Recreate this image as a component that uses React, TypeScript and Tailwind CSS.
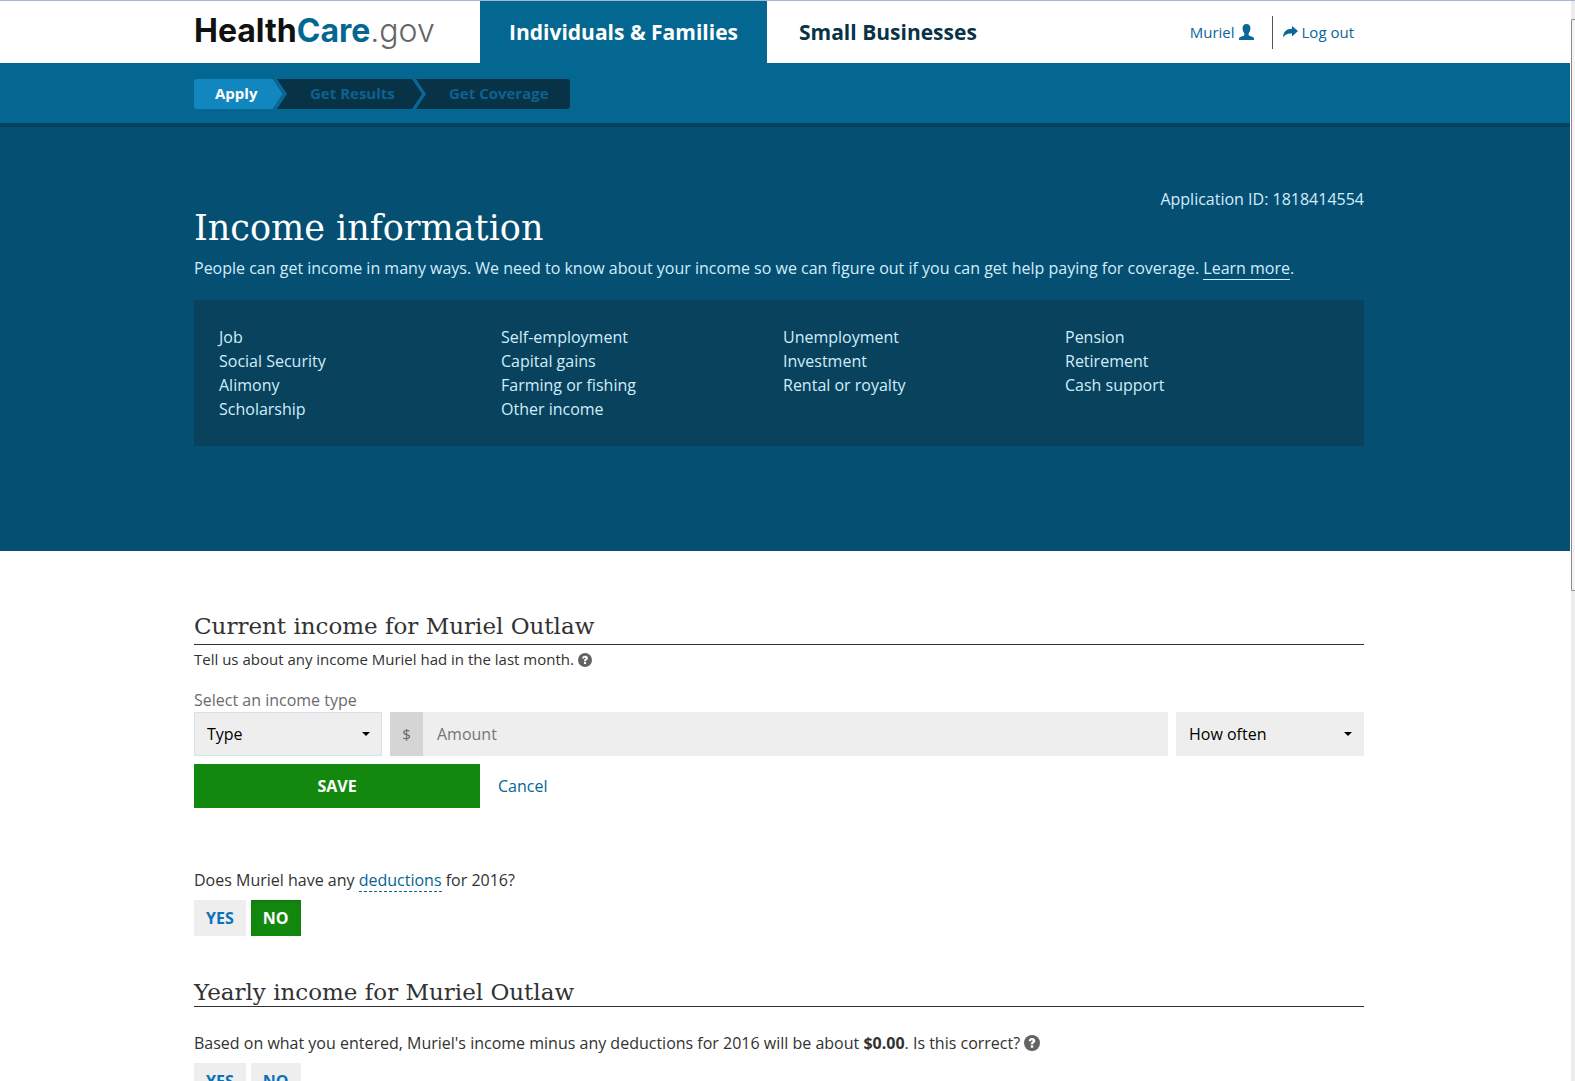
import { useState } from "react";

const incomeTypes = [
  ["Job", "Social Security", "Alimony", "Scholarship"],
  ["Self-employment", "Capital gains", "Farming or fishing", "Other income"],
  ["Unemployment", "Investment", "Rental or royalty"],
  ["Pension", "Retirement", "Cash support"],
];

function UserIcon() {
  return (
    <svg width="15" height="16" viewBox="0 0 16 16" preserveAspectRatio="none" fill="currentColor" aria-hidden="true">
      <path d="M8 0C5.200 0 3.800 1.700 3.800 4.200c0 1.900.7 3.900 1.900 5v1.500c0 .5-.3.900-.8 1.100L1.300 13.100C.5 13.400 0 14.100 0 15v1h16v-1c0-.9-.5-1.600-1.300-1.900l-3.600-1.300c-.5-.2-.8-.6-.8-1.100V9.200c1.200-1.100 1.900-3.100 1.900-5C12.200 1.700 10.800 0 8 0z" />
    </svg>
  );
}

function ShareIcon() {
  return (
    <svg width="15" height="12" viewBox="0 0 15 12" fill="currentColor" aria-hidden="true">
      <path d="M9 0l6 5-6 5.500V7.500C5 7.200 2.200 8 0 11.500.3 6 3.500 2.700 9 2.700z" />
    </svg>
  );
}

function HelpButton({ label, large = false }: { label: string; large?: boolean }) {
  return (
    <button type="button" aria-label={label} className="ml-1 inline-block align-[-2px] text-[#636363]">
      <svg className={large ? "size-4" : "size-3.5"} viewBox="0 0 16 16" aria-hidden="true">
        <circle cx="8" cy="8" r="8" fill="currentColor" />
        <path
          d="M4.700 6.300C4.800 4.200 6 3 8.100 3c1.900 0 3.200 1 3.200 2.700 0 1.300-.7 1.900-1.400 2.400-.5.400-.7.600-.7 1.200H6.800c0-1.300.4-1.800 1.100-2.300.6-.4.800-.7.800-1.100 0-.4-.3-.7-.8-.7-.6 0-.9.400-.9 1.100zM6.800 10.300h2.400v2.400H6.800z"
          fill="#fff"
        />
      </svg>
    </button>
  );
}

function StepArrow({ from }: { from: string }) {
  return (
    <svg width="14" height="30" viewBox="0 0 14 30" className="shrink-0" aria-hidden="true">
      <path d="M0 0h14v30H0z" fill="#083346" />
      <path d="M0 0l10 15L0 30z" fill={from} />
      <path d="M0 0h4l10 15L4 30H0l10-15z" fill="#0a6797" />
    </svg>
  );
}

function SelectBox({ label, outlined = false }: { label: string; outlined?: boolean }) {
  return (
    <div className="relative w-47 shrink-0">
      <select
        aria-label={label}
        id={outlined ? "income-type" : "how-often"}
        className={
          outlined
            ? "h-11 w-full appearance-none border border-[#d3e1ec] bg-[#eee] px-3 text-base text-black"
            : "h-11 w-full appearance-none border border-[#eee] bg-[#eee] px-3 text-base text-black"
        }
      >
        <option>{label}</option>
      </select>
      <svg className="pointer-events-none absolute top-5 right-3" width="8" height="4" viewBox="0 0 8 4" aria-hidden="true">
        <path d="M0 0h8L4 4z" fill="#000" />
      </svg>
    </div>
  );
}

function YesNo({ name, initial }: { name: string; initial: string | null }) {
  const [value, setValue] = useState(initial);
  return (
    <div role="group" aria-label={name} className="flex gap-[5px]">
      {["YES", "NO"].map((option) => (
        <button
          key={option}
          type="button"
          aria-pressed={value === option}
          onClick={() => setValue(option)}
          className={
            value === option
              ? "h-9 bg-[#12890e] px-3 text-base font-bold text-white inset-shadow-[0_2px_4px_rgba(0,0,0,0.12)]"
              : "h-9 bg-[#eee] px-3 text-base font-bold text-[#0b71bb]"
          }
        >
          {option}
        </button>
      ))}
    </div>
  );
}

export default function App() {
  return (
    <div className="flex h-screen overflow-hidden border-t border-[#a5b8d0] bg-white font-['Open_Sans',sans-serif] text-base text-[#323232]">
      <div className="min-w-0 flex-1">
        <header className="pr-3">
          <div className="mx-auto flex h-[62px] max-w-[1170px]">
            <a href="#home" className="w-[286px] pt-2 font-[Inter,sans-serif] text-[32px] leading-11 whitespace-nowrap">
              <span className="font-bold text-[#111]">Health</span>
              <span className="font-bold text-[#046791]">Care</span>
              <span className="font-light text-[#666]">.gov</span>
            </a>
            <nav className="flex text-[21px] leading-[62px] font-bold whitespace-nowrap">
              <a href="#individuals" className="bg-[#046791] px-[29px] text-white">Individuals &amp; Families</a>
              <a href="#small-businesses" className="px-8 text-[#083346]">Small Businesses</a>
            </nav>
            <div className="mr-2.5 ml-auto flex items-center text-[15px] text-[#0a6797]">
              <a href="#account" className="flex items-center gap-1 pr-[18px]">
                Muriel <UserIcon />
              </a>
              <a href="#logout" className="flex h-[33px] items-center gap-1 border-l border-[#555] pl-2.5">
                <ShareIcon /> Log out
              </a>
            </div>
          </div>
        </header>

        <div className="border-b-4 border-[#05425d] bg-[#046791] pt-4 pr-3 pb-3.5">
          <div className="mx-auto max-w-[1170px]">
            <ol className="flex h-[30px] w-fit overflow-hidden rounded-[3px] text-[15px] leading-7 font-bold text-[#0d6290]">
              <li className="flex">
                <span className="w-[79px] bg-[#1287bf] pl-[21px] text-white">Apply</span>
                <StepArrow from="#1287bf" />
              </li>
              <li className="flex">
                <span className="w-[125px] bg-[#083346] pl-[23px]">Get Results</span>
                <StepArrow from="#083346" />
              </li>
              <li className="w-36 bg-[#083346] pl-[23px]">Get Coverage</li>
            </ol>
          </div>
        </div>

        <section className="bg-[#054f72] pt-[60px] pr-3 pb-[105px] text-[#d0edfb]">
          <div className="mx-auto max-w-[1170px]">
            <p className="text-right leading-6">Application ID: 1818414554</p>
            <h1 className="-mt-[3px] font-['DejaVu_Serif',serif] text-[35px] leading-10 text-white">Income information</h1>
            <p className="mt-2 leading-6">
              People can get income in many ways. We need to know about your income so we can figure out if you can get help paying for coverage.{" "}
              <a href="#learn-more" className="border-b border-[#d0edfb]">Learn more</a>.
            </p>
            <div className="mt-5 grid grid-cols-4 bg-[#09425c] py-[25px] pr-[17px] pl-[25px] leading-6">
              {incomeTypes.map((column) => (
                <ul key={column[0]}>
                  {column.map((item) => (
                    <li key={item}>{item}</li>
                  ))}
                </ul>
              ))}
            </div>
          </div>
        </section>

        <main className="pt-[57px] pr-3">
          <div className="mx-auto max-w-[1170px]">
            <section>
              <h2 className="border-b border-[#323232] font-['DejaVu_Serif',serif] text-[23px] leading-9">
                Current income for Muriel Outlaw
              </h2>
              <p className="mt-0.5 text-[15px] leading-6">
                Tell us about any income Muriel had in the last month.
                <HelpButton label="Help with current income" />
              </p>
              <form className="mt-[17px]" onSubmit={(e) => e.preventDefault()}>
                <label htmlFor="income-type" className="block leading-6 text-[#6b6b6b]">Select an income type</label>
                <div className="flex gap-2">
                  <SelectBox label="Type" outlined />
                  <div className="flex h-11 min-w-0 flex-1">
                    <span className="w-[33px] bg-[#d5d5d5] text-center text-[15px] leading-11 text-[#666]">$</span>
                    <input
                      type="text"
                      aria-label="Amount"
                      placeholder="Amount"
                      className="min-w-0 flex-1 bg-[#eee] px-3.5 text-base placeholder:text-[#757575]"
                    />
                  </div>
                  <SelectBox label="How often" />
                </div>
                <div className="mt-2 flex items-center gap-[18px]">
                  <button type="submit" className="h-11 w-[286px] bg-[#12890e] text-base font-bold text-white">SAVE</button>
                  <a href="#cancel" className="text-[#046791]">Cancel</a>
                </div>
              </form>
            </section>

            <section className="mt-[60px]">
              <p className="mb-2 leading-6">
                Does Muriel have any{" "}
                <a href="#deductions" className="border-b border-dashed border-[#046791] text-[#046791]">deductions</a> for 2016?
              </p>
              <YesNo name="Deductions for 2016" initial="NO" />
            </section>

            <section className="mt-[42px]">
              <h2 className="border-b border-[#323232] font-['DejaVu_Serif',serif] text-[23px] leading-7">
                Yearly income for Muriel Outlaw
              </h2>
              <p className="mt-6 mb-2 leading-6">
                Based on what you entered, Muriel's income minus any deductions for 2016 will be about <strong>$0.00</strong>. Is this correct?
                <HelpButton label="Help with yearly income" large />
              </p>
              <YesNo name="Yearly income is correct" initial={null} />
            </section>
          </div>
        </main>
      </div>

      <div className="w-[5px] shrink-0 border-l border-white bg-[#ececec] pt-[18px]" aria-hidden="true">
        <div className="h-[572px] rounded-l-xs border border-r-0 border-[#8c8c8c] bg-[#f4f4f4]" />
      </div>
    </div>
  );
}
